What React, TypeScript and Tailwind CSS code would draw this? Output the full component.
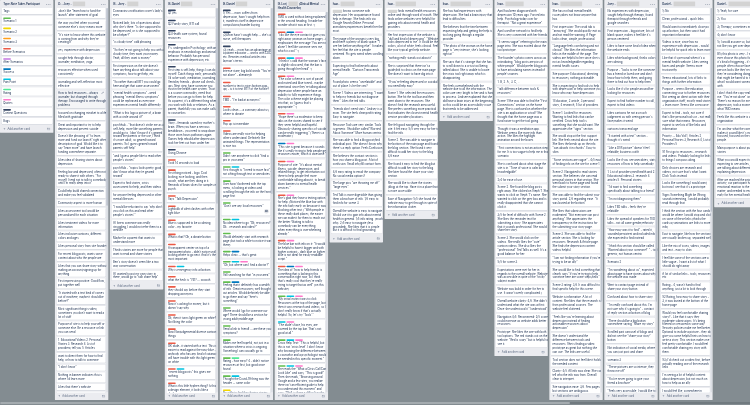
import React from 'react';
import { CreditCard, Pencil } from 'lucide-react';

const LABELS: Record<string, string> = {
  g: 'bg-[#61bd4f]',
  y: 'bg-[#f2d600]',
  o: 'bg-[#ff9f1a]',
  r: 'bg-[#eb5a46]',
  u: 'bg-[#c377e0]',
  b: 'bg-[#0079bf]',
  s: 'bg-[#00c2e0]',
  l: 'bg-[#51e898]',
  p: 'bg-[#ff78cb]',
  k: 'bg-[#344563]',
};

type ListData = {
  title: string;
  hidden?: string;
  after?: string;
  second?: string;
  thumb?: string;
  cards: string;
};

// Cards are separated by blank lines; a leading "#" line holds label codes.
const LISTS: ListData[] = [
  {
    title: 'Type-Note Taker-Participant',
    cards: `Tags

#g
Scenario 1

#y
Scenario 2

#o
Scenario 3

#r
Before Scenarios

#u
After Scenarios

#b
Success

#s
Pain Point

#l
Rating

#p
Quotes

#k
Context Questions

Bugs`,
  },
  {
    title: 'G: - Joey -',
    hidden: 'w-[63px]',
    thumb: 'h-[1010px]',
    cards: `-don't like "learn how to fund the
launch" after statement of goal

the way you feel when you read
someone else's story means more

"It's nice to know where this website
is coming from and why they're
creating it"

yes, experience with depression

sought help through doctor,
journaler, meditation, yoga

resources effective when used
consistently

journaling and self-reflection most
effective

#*
How to find resources - always
journaler, but changed through
therapy. Encouraged to write through
problems

focused on changing mindset to a life
filled with gratitude

Great and important to try to help
depression and prevent suicide

Doesn't like phrasing of "to learn
more and fund our launch" right after
description of goal. Would like it to
say "learn more" and have launch
funding somewhere separate.

Likes idea of sharing stories about
depression

Feeling low and depressed, often not
ready to share it with others. "For
myself, I tend not to talk to somebody
until I'm really deep into it"

Could help build shared connection
and make you feel validated

Community aspect is more human

Likes assessment tool would be
personalized for each situation

Likes treatment videos for more
information

Likes inclusive cartoons, different
colors and ages

Likes personal story from site founder

For recent blog posts, wants some
context about who the people are

Likes that you can share story without
making an account/signing up for
anything.

First impression positive. Good flow,
put together well

"It started with a text kind of comes
out of nowhere, maybe it should be
before?"

Most significant thing is video,
sometimes you don't want to read a
lot of stuff

Purpose of site is to help yourself or
someone else. Be a resource or link
you can send

1. Educational Videos 2. Personal
Stories 3. Research 4. List of
providers/ tell you 5. Articles

want to direct them for how to find
help, or how to talk to someone

"I don't know"

Nothing in banner indicates this is
where I'd learn more

Likes that there's website

Thinks the resources are clear`,
  },
  {
    title: 'IS - Joey -',
    hidden: 'w-[56px]',
    cards: `Coronavirus notification cover's lady's
eyes

Noticed lady, lots of questions about
why she's there. "Is she supposed to
be depressed, or is she supposed to
be a helper?"

"is cloudy time" odd phrasing

"So they're not going to help you with a
cloudy time, they want your money.
Yeah, all they want is money."

First impression on the site doesn't
have anything about talk about your
symptoms, how to get help, etc.

"So rather than call BT1 you could go
here and get that same assessment"

"mental health symptoms" -weird
phrasing "mental illness symptoms"
could be rephrased as everyone
experiences mental health differently

"What is this logo a picture of, a brain
with a circle around it?"

psychhub - "that doesn't strike me as a
self-help, more like something parents
would go to, I don't know if it's geared
toward the parents or the use, I think
it's more adult, so geared toward
parents. So I guess geared toward
parents self help"

"and I guess people like to read other
people's stories"

psychHub - "topics looks pretty good, I
don't know what they're geared
toward"

Expect to find stories, crisis
assessment for help, and then videos

for anyone feeling depressed or other
mental illnesses

"I would be reluctant to say 'why don't
you click on this and read other
people's stories'"

If I knew someone was really
struggling, I would not refer them to a
website

Maybe for a parent that wants to
understand more

Thinks stories are more for people that
want to read and share stories

Ben's story doesn't seem like a two
way conversation

If I wanted to put my own story in
there, would go to "talk share help"`,
  },
  {
    title: 'IS-Daniel',
    hidden: 'w-[58px]',
    thumb: 'h-[1000px]',
    cards: `#k
Q1 yes

#k
Q2 Family story, BT1 call

#k
Q3 Health care system, found
resources

#k
F's. undergrad in Psychology, with an
emphasis in neurobiology and animal
behavior. Probably has personal
experience with depression, etc.

#k
First step is self-help, things I can do
myself. Catch things early, personally.
I'd solve work, meditation, journaling.
Ventolin/ friends - phone call check-
ups. Next step, have someone you
trust in the health care system. Trust
is a scarce commodity, need that
before you can go to them for help.
As a parent, it's a different thing when
you work with kids or relatives. As a
parent, thankfully you can make calls
to counselors.

#k
Story - fernando saved my mother's
brain. When you have a nervous
breakdown - you need to snap down
those worn hours pathways again
Games help rebuild after depression
took her feet out from under her.

#k
Using Chrome

#r
Took 14 seconds to load

#r
First thing noticed - logo. Cool
looking, nice looking, and then
ooooh, what are they doing in it.
Reminds of brain slices for samples in
psych.

#r
Says "Talk Depression"

#r
Lightbulb of alert clashes with other
light blue

#r
Blue is supposed to be a calming
color - my favorite

#r
What is that? Oh, a donate button

#r
A transparent center on top of a
transparent photo - didn't notice until
looking where to go next. And it's the
most important

#rs
Why is emergency info at bottom

#r
what the heck is "741? -- oooooh

#r
they should say before they start
dropping acronyms

#r
Now it's asking for money, but it
doesn't say why

#r
Ok, then it turns light green on white?
Not liking the color

#r
Now Nonjudgemental diverse cartoon
things

#r
OK dude- it started with a text. This is
easier to read against the navy blue -
anybody who has any kind of cataract
will have trouble with this light green
on white

#rs
"recent blog posts" this gives me
nothing

#r
What is this little hyphen thing? Is this
a design element, it looks like a
divider`,
  },
  {
    title: 'IS-Daniel',
    hidden: 'w-[58px]',
    thumb: 'h-[950px]',
    cards: `#k
1) Yes -- mom suffers from
depression, hasn't sought help from
it, manifests itself in depressive
compulsions/hoarder buying

#k
(2)Mom hasn't sought help -- she's a
nurse, self-therapizes

#k
(3) yeah -- mom has an advantage as
a patient educator -- works with CDC
etc. Rewrites medical articles into
layman's terms.

#r
Intense stare, big bold words "You're
not alone" - alienate/jk

#r
number to text is nice (bottom pop-
up) - is it to text BT1? or the hotline?

#r
TMO - "I'm bad at acronyms"

#r
Looks clean -- a summary about us,
where to donate

#r
Pop up is immediate

#r
Videos are really nice for helping
others understand. Definitely like
animated things. The representation
is nice too.

#g
Didn't see anywhere to click "find a
pro in your area"

#gs
First thought is "I need to move fast",
not sifting through text or anecdotes

#g
User hasn't bothered with the top
menu, is looking at videos and
scrolling through the info on the front
page first

#g@
"Don't see any local resources"

#gs
No idea where to go "Ok, resources?
Ok... research and video?"

#g
Would definitely start with research
page (but took a while to notice it was
there)

#gb
Helps clinic -- that's great

#gsp
"Ok, but where can I find a doctor?"

#g
Still searching for that "in your area"

#gb
Feeling that it definitely has a wealth
of info. Great resources, well thought
out articles. Would definitely be able
to go there and say "here's
something"

#g
Where would I go for someone our
age? There should be a section for
young adult/middle age.

#g
Send a link to friend! -- are these your
symptoms?

#g
Makes me feel hopeful, not just in a
situation where a crisis is ongoing.
Something I can casually go to.

#gl
Rating - how easy? 4 - didn't notice
resources at first, but good once
found

#gs
Thought the Covid-19 thing was the
header -- same color

#y
Possible to find the sharing stories`,
  },
  {
    title: 'IS-Lori,',
    hidden: 'w-[48px]',
    after: '(Clinical Mental',
    second: 'Health Counselor)',
    thumb: 'h-[940px]',
    cards: `#r
TMO is used without being explained
in the second heading. It made her
wonder what it was at first. :(

#rbp
"I do like the eye contact it gives you
right away (woman on home page) - it
emphasizes the message 'You are not
alone' I feel like someone sees me,
which is cool." :)

#rsp
"I think it's odd that the woman's face
is slightly obscured, that the bar is
going through her head" :(

#rp
"The color scheme is sort of pastel
and muted and blue toned - maybe
intentional since they're talking about
depression where people have an
inability to fully experience things.
The color scheme might be playing
into that, so I guess that's
appropriate." :)

#rp
"Hope there's a moderator to keep
tabs on the stories shared to see if
they seem helpful and hopeful.
Obviously sharing specifics of suicide
can be really triggering." (There is a
moderator.)

#bp
"This site is great because it sounds
like it's really trying to help people get
resources easier, which is awesome."

#rp
Purpose of site: "It's about mental
illness, suicide, depression, and
related things, to get information out
there to help people feel more
comfortable talking about it, to break
down barriers to mental health
services."

#rp
She's glad they have a texting option
for help. (Noticed the blue bar with
the info fairly early on because it was
blocking other text.) "With people in
these really dark places, the easier
we can make it for them to reach out
the better. Waiting to talk to
somebody can be everything
when everything is overwhelming
already."

#rp
The blue bar with info on it: "It would
be helpful to have it bigger and with
higher contrast - dark blue on lighter
blue is not ideal for easily readable
script."

#rbp
The idea of "how to help friends is
something that is lacking in this
conversation right now, so I think
that's really cool that they're really
trying to target that as well" (on this
website)

#gsp
"My initial instinct was to click
Resources at the top of the page, but
then it says research and videos, so I
don't really know if that's actually
helpful. So, let's try 'Tools'."

#sp
"The dude's face, his eyes, are
covered by the top bar. That's not
good at all."

#gsp
Crisis Help Text: "This is helpful, but
this is not 'crisis level'. I don't know
why knowing the difference between
a counselor and a psychologist would
be needed in this specific moment."

#gsp
She reads the "What a Crisis Call Can
Look Like" and says, "This is good!"
Then she reads, "Browsing around
Google and a few sites, you realize
there isn't an efficient guide to help
you understand this moment" and
says, "Well, is there a difficult guide`,
  },
  {
    title: 'Ivan-',
    hidden: 'w-[71px]',
    cards: `[x] knows someone with
depression. Her acquaintance found
help in therapy. She finds info via
Google Search/Online. Personal
anecdotes/experiences benefit her the
most.

The image of the woman is very big
and there is plenty of blank space. "I
see her before anything else". It makes
her feel that the site is people
centered. Pic gets weird when scrolling
down.

Expecting to find hotline/info about
mental health. "Cartoon Transcends
Age"

Found photo seems "unrelatable" and
out of place. Is he the ceo?

Scene 1. Videos are interesting. "I want
to help my friends but not diagnose
them". Likes the ted talks.

"friends don't need stats" Lindsey is a
mom. The site feels clear/profit rating.
Easy to navigate.

Resource Tools are very similar. Tools
is generic. Should be called "Worried
About Someone" More human centric

She was able to find a blog post/find
individual post. She doesn't know why
there's a reply option. Feels Confusion

She believes the contact section is
how you share a blog-post. A bit of
confusion. Small info/fill contact form.

4/5 easy rating to email the company.
No social media options?

The large pics "are throwing me off"
"large eyes".

Ted Talk is more digestible than giving
them a brochure of info. 1/5 easy to
find info for scene 3.

Overall the website is easy to navigate.
Would use it to gain info about mental
health in general. 1/5 info rating. (much
info). 2/5 easy to navigate (less
grounded). She likes that it is simple
but it is difficult to find grounding.`,
  },
  {
    title: 'Ivan-',
    hidden: 'w-[104px]',
    cards: `[x] finds mental health resources
online and through word of mouth. She
finds online websites very helpful for
gaining info about mental health and
providers.

Her first impression of the website is
"dull and kind of depressing". "Website
looks depressed to me". It could be the
colors, a lot of white, feels clinical. Feel
like your typical get help website.

"nothing really stands out about it"

She is surprised that there isn't a
guide/link to clinics on the main page.
She doesn't want to have dig into it.

"If you're feeling depressed or suicidal
you need help easy"

Scene 1. She selected the resources
button. She hit the tool bar and then
went down to the resources. She
doesn't find the research area useful.
She prefers something more practical
that indicates the closest mental health
service providers/locations.

She felt good navigating through the
site. It felt easy. 5/5 very easy for her to
find the info.

Scene 2. She was able to navigate to
the bottom of the main page and found
the blog section. She found it very
difficult to add her story to the blog.
4/5 ease

She found it easy to find the blog but
difficult to add her story to the blog.
She later found the share your story
section.

She would like to share the stories
(blog) at the top. Have it in a place that
is more accessible.

Ease of Navigation: 5/5 she found the
website easy to get through in spite of
the information clutter.`,
  },
  {
    title: 'Ivan-',
    hidden: 'w-[104px]',
    cards: `She has had experiences with
depression. She had a brain injury that
lead to difficulties.

She believes that the time between
requesting help and getting the help is
too long going through a regular
provider.

"The photo of the woman on the home
page is "very intense, she's looking
right at "

She says that it's strange that she has
to scroll down to a crisis tool being
talked about. She is unable to locate
the crisis tool right away which is
disappointing.

She feels overwhelmed with the
website due to all the information. The
colors are very bright to her and is hard
to process. Lindsee explained that she
did have a brain injury at the beginning,
so this could be an accessibility issue
that needs to be addressed.`,
  },
  {
    title: 'Ivan-',
    hidden: 'w-[93px]',
    cards: `April has been diagnosed with
depression 10 years ago. Forced into
help. Psychologytoday.com for
therapist. "Not a great experience".

April used her network to find help.
She is very connected with her friends.

"It seems vague" referring to the main
page intro. She was excited about the
tool prototype.

The founder's photo comes across as
intimidating. "blog posts are pics of
white people". Would prefer blog posts
to have articulating names instead of
people's names.

1. B, 2. A., 3. C, ...

"talk difference between tools &
resources"

Scene 1 She was able to find the "First
Connections" section on the home
page. She is confused on whether the
site is an application or a tool? She
thought that the home page was a
fund raiser to get the tool going.

Thought it was a meditation app.
Website seems like more info than
action. She likes the highlight
animation around the boxes.

"First connections is not an action step
for me. It is too vague to help me in this
scenario

She is confused about what stage the
site is in. "Tone of voice is calm but
knowledgable".

2/4 for ease of use.

Scene 2. She found the blog posts
right away. She clicked on Steph T. She
wants to click on Steph T's name. She
wanted to click on the grey box and is
really disappointed that she cannot
click it.

3/5 for level of difficulty with Scene 2.
She likes the reminder text for
submitting a story. She appreciates
that it sounds professional. She would
share her story.

Scene 3. She would click on the
videos. She really likes the "cute"
cartoon videos. She also likes the
"professional" Ted Talks as well. It's a
good balance for her.

5/5 for scene 3.

Expectations were met for her in
regards to the overall website. Website
was accessible in spite of the "tricky"
subject matter.

Website was build in order for her to
use. It wasn't overly complicated.)

Overall website clarity: 4/5. She didn't
understand what the site was at first.
Once she understood it "I understood"

Navigation 4/5. Recommend: 2/5 score
could increase as website adds better
resources.

Prototype: She likes the one with both
tool options. The red stands out on the
website. "Red is scary" but is helpful to
see it.`,
  },
  {
    title: 'Ivan-',
    hidden: 'w-[111px]',
    thumb: 'h-[1500px]',
    cards: `She has not had mental health
issues/does not know anyone that
has.

First impression: The covid tab is
"annoying". She would quickly exit out
and not read the warning. A Page
looks clean, simple, professional.

"Language feels comforting and not
clinical". She likes the information
links in the middle of the page. The
videos are helpful to her since she is
not as knowledgeable regarding
mental health issues.

Site purpose: Educational, directing
to resources, nothing actionable.

She is expecting to find tools to help
with depression or help someone you
know who may have depression.

1 Education, 2 article, 3 personal
story, 4 research, 5 list of providers.

Scene 1. Looked for resources.
Wanting to find links that can be
certified. Crisis help tool is
something that she would want. She
appreciates the "signs" section.

She would stop at the first support
link. She feels neutral about the site.
She likes the break up on the info.
"can absorb it in chunks". Easy to
skim.

"Some sections are vague" - 4/5 ease
of finding info on the site for scene 1.

Scene 2. Navigated to read stories
section. She believes she can read
personal stories in that section. She
went back to home page and found
the submit your story section.

She was able to find the submit your
story portal. 2/5 regarding ease. "It
was buried at the bottom"

She likes that submissions are
moderated. "Not everyone can post
anything". She appreciates the
transparency in the instructions for
the submitting your story page.

Scene 3. She was able to find the
article section. She is looking for
resources. Research & Article page.
She finds the depression content
videos helpful.

"I am not finding information if you're
trying to be an ally"

She would like to find something that
clearly says "if you're trying to help
someone here are some steps/links"

Scene 3 rating: 3/5. It was difficult to
find specific help for this scene.

Website is informative. A lot of
content. She likes that the research is
from professional sources. The
website feel cluttered.

"Feels like you're learning about
depression instead of finding
actionable resources about
depression"

She doesn't understand the
difference between tools and
resources. She is finding a video
prototype as great but nothing she
can use. The links are useful.

Tool section does not feel like it holds
the needed content.

Clarity: 4/5. All info was clear. She can
tell who the info was from. Overall
clear to interpret.

Site navigation ease: 3/5. Few pages
but sections are ambiguous.`,
  },
  {
    title: 'Joey -',
    hidden: 'w-[114px]',
    thumb: 'h-[1500px]',
    cards: `No experiences with depression,
sought help through therapy, found
therapist through referrals and
google searches

First impression - big picture, lots of
blank space, makes it feel like it's
person centered

Likes to have some kind of idea where
the website ends

Likes white background, thinks colors
are calming

Purpose - "looks to me like someone
has a friend or loved one and don't
know how to help them, and going
there to find out how to help them"

Looks like it's for people around her
looking for resources

Expect to find hotline number to call,
expect to find videos

Likes cartoons he not as much
judgement as with seeing person's
face/makes it weird

cartoons transcend age

"It started with a text" section -
thought it's weird

"Like a DSS picture" doesn't feel
relatable, business outfit

Looks like if you see anecdotes, stats,
resources of how to help somebody

1. List of providers/med health and 2.
Educational videos 3. research 4.
articles 5. Personal stories

"I'd want to find something
specifically about talking to a friend"

"I'm not diagnosing them"

Likes TED talks - feels they're
relatable

Likes the spread of speakers for TED
talks - not all same gender/ethnicity

"How easy was it to find" - rated it,
sounded persistent and included info
she expected to find instead

"I think this section should be called
'Worried about your someone?' " - took
generic, not human centric

Scenario 2

"I'm wondering about us", expected
about page to have stories about why
the website was made

Went to contact page instead of
share your story button

Confused about how to share story

"I'm really confused about this. I'm
not sure why it's going to" - contact
of reply section at bottom of blog

"There should be a big button
somewhere saying "Share my story"

Scrolled past carousel of blogs and
did not see the "share your story"
button

Not indication of social media, where
you can just post and share

scenario 3

"These pictures are so intense, they
throw me off"

"You're never going to give your
friend a brochure"

"Feels very accessible, I would like to`,
  },
  {
    title: 'Daniel -',
    hidden: 'w-[110px]',
    thumb: 'h-[1040px]',
    cards: `1) No

Clean, professional - quick links

Would want to immediately close po
up at bottom, but then saw it had
important information

Videos is nice, since has no
experience with depression - would
be helpful for quick info to learn more

Like that it's personal when it's a
mental health website. Likes seeing
faces and people. Seems more
trustworthy

Seems educational, lots of links to
things with further information

Purpose - seems like education,
connecting your to further resources.
Not seeing an direct action with their
organization itself, mostly read stories
+ learn more. Seems like a resource

Expect to find - tools, not sure if
that's like personal tools or - not really
sure what that means. Resources,
expect to see lots of like links and
information

Priority -- Edu Vid 1, Articles 2,
Personal Stories 3, Research 4, List of
Providers 5

S1 First go to resources - research
and videos. Probably looking for links
to things I can pass along.

Only choices are research and
videos, not sure that's what I want.
Click Tools instead.

Looks like something I would want,
but now I see that it's a prototype.

Signs Something Might be Wrong
sounds interesting, I would probably
read through that

I think the section with the four cards
would be where I would stop and click
on some of these links (thinks the
cards w/ animations are links to more
info)

East to navigate, like how the sections
are visually broken up, separated well

Like the mix of icons, videos, images
and text - easy to skim

I feel like some of the sections are a
little vague - I want a list of what I
should do right away

A lot of similar links - tools, resources,
etc

Rating - 4, wasn't hard to find
anything, just a lot to look through

S2 Rating, how easy to share story -
3, it was buried at the bottom of the
home page

Would you feel comfortable sharing
story? - Like that it says they
moderate submissions. It's being
filtered or censored in some way.
Security policies make me feel better.
Optional to include a picture - they do
give you some helpful hints on how to
write a story. This section makes me
feel pretty comfortable. I would feel
comfortable sharing my story with
them.

S3) I'd check out a video first, before
actually reading one of the research
links

I'm seeing a lot of helpful content
about depression, but not much on
how to help as an ally

I would feel like, somewhere in`,
  },
  {
    title: 'Daniel -',
    hidden: 'w-[110px]',
    cards: `1) Yeah, for sure

2) You

3) Therapy, sometimes medication

4) don't know

5) I would assume so, but I would
not like you get over depression

B5) this photo is very - I wouldn't
ever choose this photo for this. It's
it's kind of triggering - it's like when
people often choose faces. The
person looks like they're not okay
they're considering doing something
that might be harmful to them, not
what I would want someone to deal
with.

I don't think the copy really speaks
me. "You're not alone" isn't for
There's no reason for me to feel
depression, took a moment to see
what TMO means

Feels like this website is about an
organization

I'm unclear what the connection is,
makes it sound like it's more
focused, focused on the donors
people.

Main purpose is about public
stories

What you would expect to find
expecting to see articles, maybe
are talking about different things
explaining depression.

After we reached the priorities
activity, our participant had an
emotional reaction to the subject
matter, and needed to end the call
early for her mental health.`,
  },
];

function Card({ source }: { source: string }) {
  const rows = source.split('\n');
  const flags = rows[0].startsWith('#') ? rows.shift()!.slice(1) : '';
  const labels = flags.split('').filter((f) => f in LABELS);
  const hovered = flags.includes('*');
  return (
    <div
      className={`flex shrink-0 items-start justify-between rounded-[3px] px-2 py-1.5 shadow-[0_1px_0_#091e4240] ${
        hovered ? 'bg-[#f4f5f7]' : 'bg-white'
      }`}
    >
      <div className="min-w-0 flex-1">
        {labels.length > 0 && (
          <div className="flex h-3 items-center gap-1">
            {labels.map((l) => (
              <span key={l} className={`h-2 w-10 rounded ${LABELS[l]}`} />
            ))}
          </div>
        )}
        {rows.map((row, i) => (
          <p key={i} className="whitespace-nowrap">
            {row.startsWith('[x]') ? (
              <>
                <span className="inline-block h-4 w-12 bg-[#d3d3d3] align-middle" />
                {row.slice(3)}
              </>
            ) : (
              row
            )}
          </p>
        ))}
        {flags.includes('@') && (
          <div className="flex h-8 items-center justify-end">
            <span className="flex size-6 items-center justify-center rounded-full bg-[#dfe1e6] text-[10px] font-bold">DK</span>
          </div>
        )}
      </div>
      {hovered && <Pencil className="-ml-4 size-3.5 shrink-0 text-[#42526e]" />}
    </div>
  );
}

function List({ list }: { list: ListData }) {
  return (
    <section className="flex max-h-[2043px] w-[272px] shrink-0 flex-col rounded-[3px] bg-[#ebecf0]">
      <header className="shrink-0 pt-2.5 pr-3 pb-[11px] pl-4 font-semibold tracking-[-0.2px]">
        <div className="flex h-5 items-center whitespace-nowrap">
          <h2>{list.title}</h2>
          {list.hidden && <span className={`ml-1.5 h-6 shrink-0 bg-[#d3d3d3] ${list.hidden}`} />}
          {list.after && <span className="ml-1">{list.after}</span>}
          <span className="ml-auto font-normal tracking-[1px] text-[#6b778c]">•••</span>
        </div>
        {list.second && <div className="h-5">{list.second}</div>}
      </header>
      <div className="flex min-h-0 gap-1 overflow-hidden pr-0.5 pl-2">
        <div className={`flex min-w-0 flex-1 flex-col gap-2 pb-[7px] ${list.thumb ? '' : 'pr-0.5'}`}>
          {list.cards.split('\n\n').map((c, i) => (
            <Card key={i} source={c} />
          ))}
        </div>
        {list.thumb ? (
          <div className="w-2 rounded bg-[#dcdfe5]">
            <div className={`w-2 rounded bg-[#bcc3ce] ${list.thumb}`} />
          </div>
        ) : null}
      </div>
      <footer className="flex h-[38px] shrink-0 items-center px-4 text-[#5e6c84]">
        <span className="mr-2.5 text-lg">+</span>
        <span>Add another card</span>
        <CreditCard className="ml-auto size-4" />
      </footer>
    </section>
  );
}

export default function App() {
  return (
    <main className="flex h-[405px] w-[750px] flex-col overflow-hidden bg-[#838c91]">
      <div className="h-[402px] shrink-0 overflow-hidden">
        <div className="flex w-[3912px] origin-top-left scale-x-[0.1962] scale-y-[0.1958] items-start gap-2 font-[Inter,'Liberation_Sans',sans-serif] text-sm leading-5 tracking-[-0.05px] text-[#172b4d] will-change-transform">
          {LISTS.map((list, i) => (
            <List key={i} list={list} />
          ))}
        </div>
      </div>
      <div className="h-[2px] shrink-0 bg-[#717a7f]">
        <div className="h-full w-[570px] rounded-full bg-[#a4abaf]" />
      </div>
    </main>
  );
}
